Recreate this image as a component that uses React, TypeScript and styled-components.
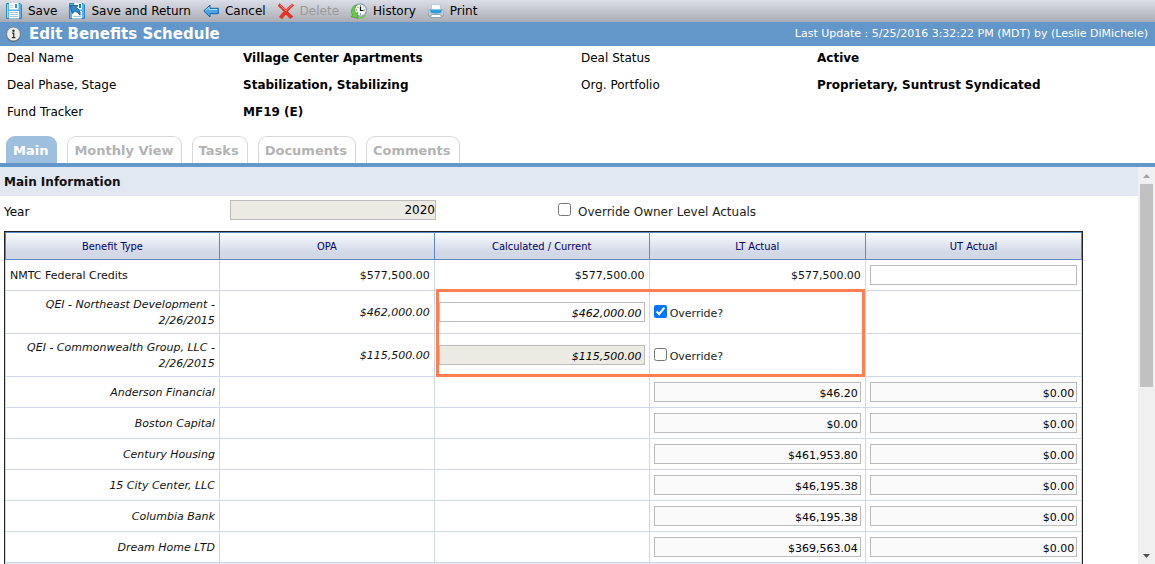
import React, { useState } from 'react';
import styled, { createGlobalStyle } from 'styled-components';

const VERDANA = `Verdana, "DejaVu Sans", sans-serif`;
const TAHOMA = `Tahoma, "DejaVu Sans Condensed", "DejaVu Sans", sans-serif`;

const GlobalStyle = createGlobalStyle`
  *, *::before, *::after { box-sizing: border-box; }
  body { margin: 0; background: #fff; color: #000; font-family: ${VERDANA}; font-size: 12px; }
`;

const Page = styled.div`
  display: flex;
  flex-direction: column;
  height: 100vh;
  overflow: hidden;
`;

const Toolbar = styled.div`
  flex: none;
  display: flex;
  align-items: center;
  gap: 12px;
  height: 22px;
  padding: 0 6px;
  background: linear-gradient(#dbdee6, #a9acb3);
`;

const ToolButton = styled.button`
  display: flex;
  align-items: center;
  gap: 6px;
  padding: 0;
  border: 0;
  background: none;
  font: 12px/20px ${VERDANA};
  color: #000;
  white-space: nowrap;
  &:disabled { color: #999; }
`;

const TitleBar = styled.header`
  flex: none;
  display: flex;
  align-items: center;
  gap: 8px;
  height: 24px;
  padding: 0 7px 0 6px;
  background: #6397ca;
  color: #fff;
  svg { flex: none; }
`;

const Title = styled.h1`
  flex: 1;
  margin: 0;
  font-size: 15px;
  line-height: 24px;
`;

const LastUpdate = styled.span`
  font-size: 11px;
  line-height: 24px;
  white-space: nowrap;
`;

const Summary = styled.dl`
  flex: none;
  display: grid;
  grid-template-columns: 236fr 338fr 236fr 338fr;
  grid-auto-rows: 24px;
  row-gap: 3px;
  margin: 0;
  padding: 0 0 12px 7px;
  line-height: 24px;
`;

const Term = styled.dt<{ $col: number }>`
  grid-column: ${p => p.$col};
`;

const Detail = styled.dd`
  margin: 0;
  font-weight: bold;
  white-space: nowrap;
`;

const Tabs = styled.nav`
  flex: none;
  display: flex;
  gap: 10px;
  padding: 0 6px;
  border-bottom: 4px solid #6397ca;
`;

const Tab = styled.a<{ $active?: boolean }>`
  height: 27px;
  padding: 0 7px 0 6px;
  border: 1px solid ${p => (p.$active ? '#9fbfdf' : '#d8d8d8')};
  border-bottom: 0;
  border-radius: 9px 9px 0 0;
  background: ${p => (p.$active ? '#9fbfdf' : '#fff')};
  color: ${p => (p.$active ? '#fff' : '#b3b3b3')};
  font-size: 13px;
  font-weight: bold;
  line-height: 27px;
  text-decoration: none;
  white-space: nowrap;
  &:not(:nth-child(2)) { padding-right: 8px; }
`;

const Body = styled.div`
  flex: 1;
  min-height: 0;
  display: flex;
`;

const Content = styled.main`
  flex: 1;
  min-width: 0;
  overflow: auto;
  scrollbar-width: none;
`;

const SectionTitle = styled.h2`
  margin: 0;
  padding: 2px 4px 0;
  background: #e1e8f2;
  color: #111;
  font-size: 12px;
  line-height: 27px;
`;

const YearRow = styled.div`
  display: grid;
  grid-template-columns: 226fr 328fr 576fr;
  align-items: start;
  height: 35px;
  padding: 4px 4px 0;
  line-height: 24px;
`;

const Field = styled.input`
  display: block;
  width: 100%;
  height: 20px;
  padding: 2px 2px 0;
  border: 1px solid #bbb;
  background: #fff;
  color: #000;
  font: inherit;
  font-size: 11px;
  text-align: right;
  &:read-only { background: #fafafa; }
  &:disabled { background: #ebebe3; color: #000; }
`;

const EditableField = styled(Field)`
  &:enabled { background: #fff; }
`;

const YearField = styled(Field)`
  width: 206px;
  padding: 0;
  font-size: 12px;
  line-height: 18px;
`;

const CheckLabel = styled.label`
  display: flex;
  align-items: flex-start;
  gap: 7px;
  color: #222;
`;

const Check = styled.input`
  flex: none;
  width: 13px;
  height: 13px;
  margin: 0;
`;

const YearCheck = styled(Check)`
  margin-top: 3px;
`;

const OverrideLabel = styled(CheckLabel)`
  gap: 3px;
  padding-top: 4px;
  line-height: 18px;
`;

const TableWrap = styled.div`
  padding: 0 4px;
`;

const Grid = styled.table`
  width: 95.5%;
  table-layout: fixed;
  border: 1px solid #222;
  border-collapse: separate;
  border-spacing: 0;
  font-size: 11px;
  line-height: 16px;
`;

const NarrowCol = styled.col`
  width: 19.95%;
`;

const HeadCell = styled.th`
  height: 28px;
  padding: 2px 0 0;
  border: 1px solid #5b8ac6;
  border-left-width: 0;
  background: linear-gradient(#f8fcfd, #d3d8e7 75%);
  color: #000066;
  font: 11px/16px ${TAHOMA};
  &:first-child { border-left-width: 1px; }
`;

const Cell = styled.td<{ $italic?: boolean; $control?: boolean; $left?: boolean }>`
  position: relative;
  height: 31px;
  padding: ${p => (p.$control ? '5px 4px' : '6px 4px 4px')};
  border: 0 solid #d0d7e5;
  border-width: 0 1px 1px 0;
  font-style: ${p => (p.$italic ? 'italic' : 'normal')};
  text-align: ${p => (p.$left ? 'left' : 'right')};
  color: #111;
  &:first-child { border-left-width: 1px; }
`;

const FooterCell = styled.td`
  height: 28px;
  background: #e1e8f2;
`;

const Highlight = styled.div`
  position: absolute;
  z-index: 1;
  top: -2px;
  left: 1px;
  width: calc(200% + 1px);
  height: calc(200% + 4px);
  border: 3px solid #ff7f50;
  pointer-events: none;
`;

const Scrollbar = styled.div`
  flex: none;
  display: flex;
  flex-direction: column;
  width: 17px;
  background: #f0f0f0;
`;

const ScrollArrow = styled.div`
  flex: none;
  display: flex;
  align-items: center;
  justify-content: center;
  height: 17px;
`;

const ScrollTrack = styled.div`
  flex: 1;
  padding: 0 2px;
`;

const ScrollThumb = styled.div`
  height: 56%;
  background: #c1c1c1;
`;

const Icon = ({ children }: { children: React.ReactNode }) => (
  <svg width="16" height="16" viewBox="0 0 16 16" aria-hidden="true">{children}</svg>
);

const SaveIcon = () => (
  <Icon>
    <path d="M.5.5h13.5l1.5 1.5v13.5h-15z" fill="#58b4e8" stroke="#2a86c2" />
    <rect x="3" y="0" width="9.5" height="6.5" fill="#f7fbfe" />
    <rect x="9" y="1" width="2" height="4" fill="#3d93cb" />
    <path d="M4 2.500h3.500M4 4.500h3.500" stroke="#c9dce8" />
    <rect x="3" y="8" width="10" height="7.500" fill="#fff" />
    <path d="M4 9.500h8M4 11.500h8M4 13.500h8" stroke="#a9c4d6" />
    <path d="M1.500 1.500v13" stroke="#a5dcf8" />
  </Icon>
);

const SaveReturnIcon = () => (
  <Icon>
    <path d="M.5.5h13.5l1.5 1.5v13.5h-15z" fill="#58b4e8" stroke="#2a86c2" />
    <rect x="5" y="0" width="8" height="6.5" fill="#f7fbfe" />
    <rect x="10" y="1" width="2" height="4" fill="#2577ba" />
    <rect x="3" y="8" width="10" height="7.500" fill="#fff" />
    <path d="M4 13.500h8M10.500 9.500h2M11.500 11.500h1.500" stroke="#a9c4d6" />
    <path d="M1 2.500h8L7.200 4.500C10 6 11.300 8.500 11 12.300 9.800 10.300 8 9 5.800 8.300L3.500 10.700z" fill="#3089cc" stroke="#0f5490" strokeWidth=".8" />
  </Icon>
);

const CancelIcon = () => (
  <Icon>
    <path d="M.8 8 7 2v3.300h8.300v5.400H7V14z" fill="#4ba5e3" stroke="#1464a8" strokeLinejoin="round" />
    <path d="M2.500 7.500 6 4.300v2.200h8.300" fill="none" stroke="#a7dbfa" />
  </Icon>
);

const DeleteIcon = () => (
  <Icon>
    <path d="M1.500.7C4 2.500 6 4.500 8 6.800 9.800 4.500 12 2.500 14.500 1l1 1.500C13 4.500 11.200 6.500 9.700 8.600c1.500 1.900 3.300 3.600 5.300 5l-2.700 1.900C10.500 14 9 12.500 7.800 11c-1.300 1.500-2.500 3.100-3.600 4.700L1.500 14c1.300-2 2.800-3.800 4.300-5.500C4.200 6.500 2.400 4.600.3 3z" fill="#f0301d" stroke="#c9281a" strokeWidth=".6" />
    <path d="M1.800 1.800C4 3.400 6 5.800 8 8c2-2.600 4-4.600 6.500-6" fill="none" stroke="#ff8573" strokeWidth=".9" />
  </Icon>
);

const HistoryIcon = () => (
  <Icon>
    <circle cx="9.300" cy="7" r="6.200" fill="#f4f8fb" stroke="#8aa2b6" strokeWidth="1.200" />
    <path d="M9.500 2.300v1.300M9.500 10.400v1.300M5 7h1.200M12.800 7H14M12.500 4l-.7.7M6.500 4l.7.7" stroke="#666" />
    <path d="M9.500 3.800V7.500h3" fill="none" stroke="#111" strokeWidth="1.200" />
    <path d="M3.500 2.500C.5 5-.3 9 1.500 12L.2 13.800l6.800 1.500-.5-6-1.800 1.300C3.300 8.300 3.500 5 5.500 2z" fill="#6cc94a" stroke="#3b9a28" strokeWidth=".7" />
    <path d="M7.500 14.700c2.500.6 5-.2 7-2.500" fill="none" stroke="#6cc94a" strokeWidth="1.500" />
  </Icon>
);

const PrintIcon = () => (
  <Icon>
    <path d="M3.500 7v-5.500h7.500l1.500 1.500v4z" fill="#fff" stroke="#b9c9d6" />
    <path d="M.5 8.500Q.5 7 2 7h12q1.500 0 1.500 1.500V13H.5z" fill="#c3d0da" stroke="#8fa3b3" strokeWidth=".8" />
    <path d="M2.500 6h11v3.500q-5.500 2-11 0z" fill="#2f9ade" />
    <path d="M3 6.500h10" stroke="#83cdf5" />
    <path d="M3.500 11.500h9l1 3h-11z" fill="#fff" stroke="#8fa6b8" />
  </Icon>
);

const InfoIcon = () => (
  <svg width="15" height="16" viewBox="0 0 15 16" aria-hidden="true">
    <circle cx="7.500" cy="8.500" r="7.300" fill="#4b5968" />
    <circle cx="7.500" cy="8" r="6.900" fill="#ececec" stroke="#7d7d7d" strokeWidth=".8" />
    <circle cx="7.500" cy="4.800" r="1.200" fill="#333" />
    <path d="M6 7.200h1.700v4.300M5.800 11.700h3.600" fill="none" stroke="#333" strokeWidth="1.300" />
  </svg>
);

const tools = [
  { label: 'Save', icon: <SaveIcon /> },
  { label: 'Save and Return', icon: <SaveReturnIcon /> },
  { label: 'Cancel', icon: <CancelIcon /> },
  { label: 'Delete', icon: <DeleteIcon />, disabled: true },
  { label: 'History', icon: <HistoryIcon /> },
  { label: 'Print', icon: <PrintIcon /> },
];

const summary = [
  { term: 'Deal Name', value: 'Village Center Apartments', col: 1 },
  { term: 'Deal Status', value: 'Active', col: 3 },
  { term: 'Deal Phase, Stage', value: 'Stabilization, Stabilizing', col: 1 },
  { term: 'Org. Portfolio', value: 'Proprietary, Suntrust Syndicated', col: 3 },
  { term: 'Fund Tracker', value: 'MF19 (E)', col: 1 },
];

const tabs = ['Main', 'Monthly View', 'Tasks', 'Documents', 'Comments'];
const columns = ['Benefit Type', 'OPA', 'Calculated / Current', 'LT Actual', 'UT Actual'];

const investments = [
  { name: 'QEI - Northeast Development - 2/26/2015', amount: '$462,000.00', override: true },
  { name: 'QEI - Commonwealth Group, LLC - 2/26/2015', amount: '$115,500.00', override: false },
];

const owners = [
  { name: 'Anderson Financial', lt: '$46.20' },
  { name: 'Boston Capital', lt: '$0.00' },
  { name: 'Century Housing', lt: '$461,953.80' },
  { name: '15 City Center, LLC', lt: '$46,195.38' },
  { name: 'Columbia Bank', lt: '$46,195.38' },
  { name: 'Dream Home LTD', lt: '$369,563.04' },
];

function InvestmentRow({ name, amount, override, highlighted }: {
  name: string; amount: string; override: boolean; highlighted: boolean;
}) {
  const [checked, setChecked] = useState(override);
  return (
    <tr>
      <Cell $italic>{name}</Cell>
      <Cell $italic>{amount}</Cell>
      <Cell $italic $control>
        <EditableField aria-label={`${name} current`} defaultValue={amount} disabled={!checked} />
        {highlighted && <Highlight />}
      </Cell>
      <Cell $left $control>
        <OverrideLabel>
          <Check type="checkbox" checked={checked} onChange={e => setChecked(e.target.checked)} />
          Override?
        </OverrideLabel>
      </Cell>
      <Cell />
    </tr>
  );
}

export default function App() {
  return (
    <Page>
      <GlobalStyle />
      <Toolbar role="toolbar">
        {tools.map(t => (
          <ToolButton key={t.label} type="button" disabled={t.disabled}>{t.icon}{t.label}</ToolButton>
        ))}
      </Toolbar>
      <TitleBar>
        <InfoIcon />
        <Title>Edit Benefits Schedule</Title>
        <LastUpdate>Last Update : 5/25/2016 3:32:22 PM (MDT) by (Leslie DiMichele)</LastUpdate>
      </TitleBar>
      <Summary>
        {summary.map(s => (
          <React.Fragment key={s.term}>
            <Term $col={s.col}>{s.term}</Term>
            <Detail>{s.value}</Detail>
          </React.Fragment>
        ))}
      </Summary>
      <Tabs>
        {tabs.map((t, i) => <Tab key={t} href="#" $active={i === 0}>{t}</Tab>)}
      </Tabs>
      <Body>
        <Content>
          <SectionTitle>Main Information</SectionTitle>
          <YearRow>
            <label htmlFor="year">Year</label>
            <YearField id="year" defaultValue="2020" disabled />
            <CheckLabel><YearCheck type="checkbox" />Override Owner Level Actuals</CheckLabel>
          </YearRow>
          <TableWrap>
            <Grid>
              <colgroup>
                <NarrowCol />
                <NarrowCol />
                <NarrowCol />
                <col />
                <col />
              </colgroup>
              <thead>
                <tr>{columns.map(c => <HeadCell key={c} scope="col">{c}</HeadCell>)}</tr>
              </thead>
              <tbody>
                <tr>
                  <Cell $left>NMTC Federal Credits</Cell>
                  <Cell>$577,500.00</Cell>
                  <Cell>$577,500.00</Cell>
                  <Cell>$577,500.00</Cell>
                  <Cell $control><EditableField aria-label="NMTC Federal Credits UT actual" /></Cell>
                </tr>
                {investments.map((v, i) => <InvestmentRow key={v.name} {...v} highlighted={i === 0} />)}
                {owners.map(o => (
                  <tr key={o.name}>
                    <Cell $italic>{o.name}</Cell>
                    <Cell />
                    <Cell />
                    <Cell $control><Field aria-label={`${o.name} LT actual`} defaultValue={o.lt} readOnly /></Cell>
                    <Cell $control><Field aria-label={`${o.name} UT actual`} defaultValue="$0.00" readOnly /></Cell>
                  </tr>
                ))}
              </tbody>
              <tfoot>
                <tr><FooterCell colSpan={5} /></tr>
              </tfoot>
            </Grid>
          </TableWrap>
        </Content>
        <Scrollbar aria-hidden="true">
          <ScrollArrow><svg width="7" height="4"><path d="M0 4 3.500 0 7 4z" fill="#a3a3a3" /></svg></ScrollArrow>
          <ScrollTrack><ScrollThumb /></ScrollTrack>
          <ScrollArrow><svg width="7" height="4"><path d="M0 0h7L3.500 4z" fill="#505050" /></svg></ScrollArrow>
        </Scrollbar>
      </Body>
    </Page>
  );
}
